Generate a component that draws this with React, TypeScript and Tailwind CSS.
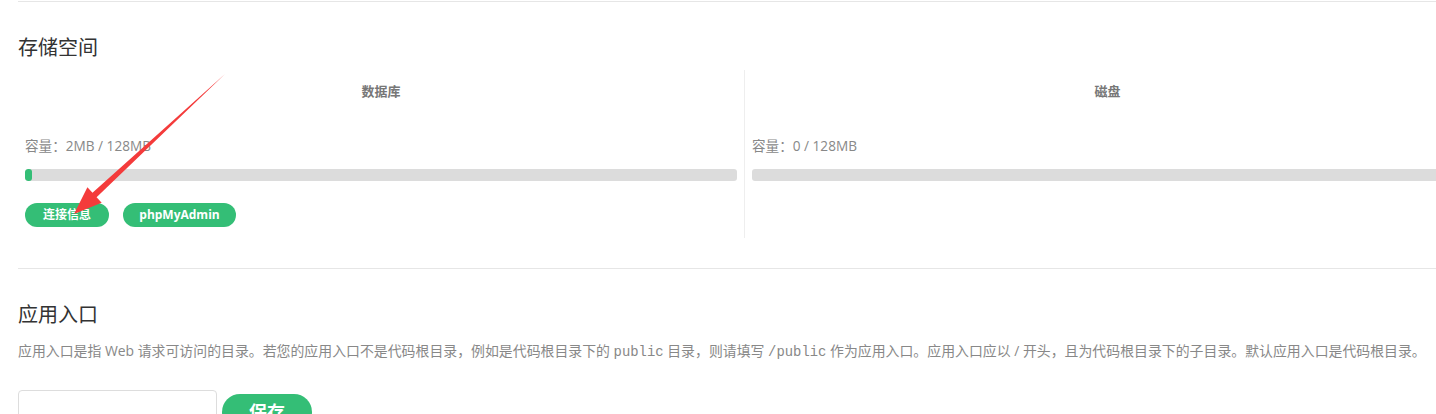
import React from "react";

const FONT = { fontFamily: '"Open Sans", "Noto Sans CJK SC", sans-serif' };

function Arrow() {
  // tail (225,74) -> tip (75,214)
  const tx = 225, ty = 74, hx = 74, hy = 214;
  const dx = hx - tx, dy = hy - ty;
  const len = Math.hypot(dx, dy);
  const ux = dx / len, uy = dy / len;
  const px = -uy, py = ux;
  const headLen = 28, headHalf = 10.5, shaftHalf = 3;
  const bx = hx - ux * headLen, by = hy - uy * headLen;
  const pts = [
    [tx, ty],
    [bx + px * shaftHalf, by + py * shaftHalf],
    [bx + px * headHalf, by + py * headHalf],
    [hx, hy],
    [bx - px * headHalf, by - py * headHalf],
    [bx - px * shaftHalf, by - py * shaftHalf],
  ]
    .map((p) => p.join(","))
    .join(" ");
  return (
    <svg className="absolute left-0 top-0 pointer-events-none" width="300" height="240">
      <polygon points={pts} fill="#f43b3b" />
    </svg>
  );
}

function Column({ title, cap, fill, buttons, border }: { title: string; cap: string; fill: number; buttons?: boolean; border?: boolean }) {
  return (
    <div className={"w-[726px] flex flex-col px-[7px] pb-[11px]" + (border ? " border-l border-[#eeeeee]" : "")}>
      <div className="h-[42px] leading-[42px] text-center text-[13px] font-bold text-[#777777]">{title}</div>
      <div className="mt-[24px] h-[20px] leading-[20px] text-[13.6px] text-[#888888]">{cap}</div>
      <div className="mt-[13px] h-[12px] rounded-[3px] bg-[#dcdcdc] overflow-hidden">
        {fill > 0 && <div className="h-full rounded-[3px] bg-[#34be76]" style={{ width: fill }} />}
      </div>
      <div className="mt-[22px] h-[24px] flex gap-[14px]">
        {buttons && (
          <>
            <button className="h-[24px] w-[84px] rounded-full bg-[#34be76] text-white text-[12px] font-bold">连接信息</button>
            <button className="h-[24px] w-[113px] rounded-full bg-[#34be76] text-white text-[12px] font-bold">phpMyAdmin</button>
          </>
        )}
      </div>
    </div>
  );
}

export default function App() {
  return (
    <div className="relative w-full h-[414px] overflow-hidden bg-white" style={FONT}>
      <div className="w-[1480px] pl-[18px] flex flex-col">
        <div className="mt-px h-px bg-[#e6e6e6]" />
        <div className="mt-[32px] h-[28px] leading-[28px] text-[20px] text-[#333333]">存储空间</div>
        <div className="mt-[8px] flex">
          <Column title="数据库" cap="容量：2MB / 128MB" fill={7} buttons />
          <Column title="磁盘" cap="容量：0 / 128MB" fill={0} border />
        </div>
        <div className="mt-[30px] h-px bg-[#e6e6e6]" />
        <div className="mt-[32px] h-[28px] leading-[28px] text-[20px] text-[#333333]">应用入口</div>
        <div className="mt-[12px] h-[20px] leading-[20px] text-[13.9px] text-[#888888] whitespace-nowrap">
          应用入口是指 Web 请求可访问的目录。若您的应用入口不是代码根目录，例如是代码根目录下的{" "}
          <code style={{ fontFamily: '"Liberation Mono", monospace' }}>public</code> 目录，则请填写{" "}
          <code style={{ fontFamily: '"Liberation Mono", monospace' }}>/public</code> 作为应用入口。应用入口应以 / 开头，且为代码根目录下的子目录。默认应用入口是代码根目录。
        </div>
        <div className="mt-[29px] flex items-start">
          <input className="w-[199px] h-[36px] rounded-[4px] border border-[#dddddd] outline-none px-2" />
          <button className="ml-[5px] mt-[4px] w-[90px] h-[36px] rounded-full bg-[#34be76] text-white text-[18px] font-bold">保存</button>
        </div>
      </div>
      <Arrow />
    </div>
  );
}
